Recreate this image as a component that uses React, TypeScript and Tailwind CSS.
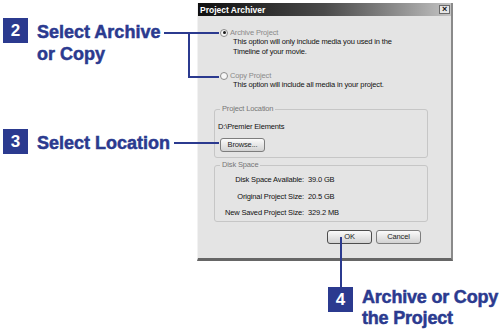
const navy = '#2b3a8f';

const Callout = ({ n, lines, className }: { n: string; lines: string[]; className: string }) => (
  <div className={`absolute flex items-start ${className}`}>
    <div className="w-[25px] h-[25px] bg-[#2b3a8f] text-white flex items-center justify-center text-[17px] font-bold leading-none">
      {n}
    </div>
    <div className="ml-[9px] mt-[3px] text-[18px] leading-[22px] font-bold text-[#2b3a8f] whitespace-nowrap [-webkit-text-stroke:0.5px_#2b3a8f]">
      {lines.map((l) => (
        <div key={l}>{l}</div>
      ))}
    </div>
  </div>
);

const Radio = ({ checked }: { checked?: boolean }) => (
  <div className="w-[8px] h-[8px] rounded-full border border-[#8c8c8c] bg-[#f6f6f6] flex items-center justify-center shrink-0">
    {checked && <div className="w-[3px] h-[3px] rounded-full bg-[#1a1a1a]" />}
  </div>
);

const Btn = ({ label, dark }: { label: string; dark?: boolean }) => (
  <div
    className={`w-[45px] h-[14px] rounded-[3px] border ${
      dark ? 'border-[#4d4d4d]' : 'border-[#7d7d7d]'
    } bg-linear-to-b from-[#fbfbfb] to-[#d2d2d2] flex items-center justify-center text-[#222]`}
  >
    {label}
  </div>
);

export default function App() {
  return (
    <div
      className="relative w-[500px] h-[334px] bg-white overflow-hidden pt-[3px] pl-[197px]"
      style={{ fontFamily: '"Liberation Sans", Arial, sans-serif' }}
    >
      {/* ダイアログ */}
      <div className="w-[256px] h-[258px] bg-[#e4e4e4] border-l border-l-[#f2f2f2] border-r-2 border-r-[#8a8a8a] border-b-[3px] border-b-[#666] text-[7.5px] leading-[10px] tracking-[-0.15px] text-[#111]">
        <div className="h-[13px] bg-linear-to-r from-[#101010] via-[#4a4a4a] to-[#c4c4c4] flex items-center justify-between pl-[2px] pr-[1px]">
          <span className="text-white font-bold text-[8.5px] tracking-normal">Project Archiver</span>
          <div className="w-[11px] h-[9px] bg-[#e6e6e6] border border-[#6a6a6a] flex items-center justify-center text-[9px] font-bold leading-none">
            ×
          </div>
        </div>

        {/* ラジオ */}
        <div className="pl-[22px]">
          <div className="mt-[12px] flex items-center gap-[2px] h-[9px]">
            <Radio checked />
            <span className="text-[#8a8a8a]">Archive Project</span>
          </div>
          <div className="pl-[13px]">
            <div>This option will only include media you used in the</div>
            <div>Timeline of your movie.</div>
          </div>
          <div className="mt-[14px] flex items-center gap-[2px] h-[9px]">
            <Radio />
            <span className="text-[#8a8a8a]">Copy Project</span>
          </div>
          <div className="pl-[13px]">This option will include all media in your project.</div>
        </div>

        {/* Project Location */}
        <fieldset className="ml-[16px] mt-[14px] w-[214px] border border-[#c6c6c6] rounded-[3px] pb-[5px]">
          <legend className="ml-[5px] px-[2px] text-[#777]">Project Location</legend>
          <div className="mt-[8px] pl-[3px]">D:\Premier Elements</div>
          <div className="mt-[6px] pl-[5px]">
            <Btn label="Browse..." />
          </div>
        </fieldset>

        {/* Disk Space */}
        <fieldset className="ml-[16px] mt-[2px] w-[214px] border border-[#c6c6c6] rounded-[3px] pb-[3px]">
          <legend className="ml-[5px] px-[2px] text-[#777]">Disk Space</legend>
          <div className="mt-[5px] grid grid-cols-[89px_1fr] gap-x-[4px] gap-y-[6.5px]">
            <div className="text-right">Disk Space Available:</div>
            <div>39.0 GB</div>
            <div className="text-right">Original Project Size:</div>
            <div>20.5 GB</div>
            <div className="text-right">New Saved Project Size:</div>
            <div>329.2 MB</div>
          </div>
        </fieldset>

        <div className="mt-[8px] flex justify-end gap-[4px] pr-[30px]">
          <Btn label="OK" dark />
          <Btn label="Cancel" />
        </div>
      </div>

      {/* 注釈 */}
      <Callout n="2" lines={['Select Archive', 'or Copy']} className="left-[3px] top-[18px]" />
      <Callout n="3" lines={['Select Location']} className="left-[3px] top-[129px]" />
      <div className="absolute left-[328px] top-[287px] flex items-start">
        <div className="w-[25px] h-[25px] bg-[#2b3a8f] text-white flex items-center justify-center text-[17px] font-bold leading-none">
          4
        </div>
        <div className="ml-[9px] text-[18px] leading-[21px] font-bold text-[#2b3a8f] whitespace-nowrap tracking-[-0.2px] [-webkit-text-stroke:0.5px_#2b3a8f]">
          <div>Archive or Copy</div>
          <div>the Project</div>
        </div>
      </div>

      <svg className="absolute left-0 top-0 pointer-events-none" width="500" height="334">
        <g stroke={navy} strokeWidth="2" fill="none">
          <path d="M164 33 H219 M189 33 V77 H219" />
          <path d="M174 143 H219" />
          <path d="M341 237 V287" />
        </g>
      </svg>
    </div>
  );
}
